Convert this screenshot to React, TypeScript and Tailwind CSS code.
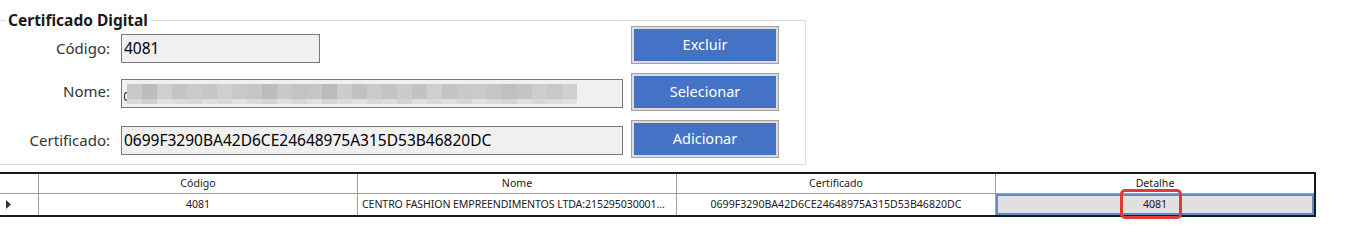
import React from "react";

const blurTop = [
  "#c8c8c8","#bdbdbd","#cfcfcf","#c4c4c4","#cacaca","#c6c6c6","#cfcfcf","#c9c9c9","#c6c6c2","#b9bdbf","#c9c9c9","#c3c3c3","#c5c5c5","#bbbbbb","#cccccc","#c1c1c1","#cacaca","#c4c4c4","#cbcbcb","#c2c2c2","#cfcfcf","#c4c4c4","#c9c9c9","#cacaca","#c5c5c5","#c0c0c0","#c4c4c4","#cdcdcd","#c8c8c8","#d0d0d0",
];
const blurBot = [
  "#d8d8d8","#cfcfcf","#e0e0e0","#dcdcdc","#d6d6d6","#dedede","#d9d9d9","#e2e2e2","#dbdbdb","#d4d4d4","#dedede","#d7d7d7","#e0e0e0","#d5d5d5","#dbdbdb","#e1e1e1","#d8d8d8","#dcdcdc","#d3d3d3","#dfdfdf","#d9d9d9","#dddddd","#d6d6d6","#e0e0e0","#dadada","#d4d4d4","#dedede","#d7d7d7","#dcdcdc","#e0e0e0",
];

function Btn({ label }: { label: string }) {
  return (
    <div className="w-[148px] h-[38px] border border-[#a0a0a0] bg-[#dcdcdc] p-[2px]">
      <div className="w-full h-full bg-[#4472c4] text-white flex items-center justify-center text-[14.5px]">
        {label}
      </div>
    </div>
  );
}

export default function App() {
  const font = { fontFamily: '"Noto Sans", "Open Sans", sans-serif' };
  return (
    <div className="w-[1370px] h-[238px] bg-white relative overflow-hidden text-black" style={font}>
      {/* Group box */}
      <div className="mt-[20px] w-[806px] h-[145px] border-t border-r border-b border-[#dcdcdc] relative flex">
        <div className="absolute left-[6px] top-[-12px] bg-white px-[2px] text-[15.5px] font-bold leading-[22px] text-[#1a1a1a]">
          Certificado Digital
        </div>
        {/* fields */}
        <div className="flex flex-col pt-[13px]">
          <div className="flex items-center h-[29px]">
            <div className="w-[110px] text-right text-[15px] text-[#333]">Código:</div>
            <div className="ml-[11px] w-[199px] h-[29px] border border-[#7a7a7a] bg-[#f0f0f0] flex items-center pl-[2px] text-[15.5px]">
              4081
            </div>
          </div>
          <div className="flex items-center h-[29px] mt-[16px]">
            <div className="w-[110px] text-right text-[15px] text-[#333] mb-[5px]">Nome:</div>
            <div className="ml-[11px] w-[502px] h-[29px] border border-[#7a7a7a] bg-[#f0f0f0] flex items-center pl-[2px] overflow-hidden">
              <div className="w-[3px] h-[9px] mt-[5px] border-l-[1.5px] border-t border-b border-[#333] rounded-l-[4px]" />
              <div className="flex flex-col">
                <div className="flex h-[15px]">
                  {blurTop.map((c, i) => (
                    <div key={i} className="w-[15px] h-full" style={{ background: c }} />
                  ))}
                </div>
                <div className="flex h-[5px]">
                  {blurBot.map((c, i) => (
                    <div key={i} className="w-[15px] h-full" style={{ background: c }} />
                  ))}
                </div>
              </div>
            </div>
          </div>
          <div className="flex items-center h-[29px] mt-[18px]">
            <div className="w-[110px] text-right text-[15px] text-[#333]">Certificado:</div>
            <div className="ml-[11px] w-[502px] h-[29px] border border-[#7a7a7a] bg-[#f0f0f0] flex items-center pl-[2px] text-[15.5px]">
              0699F3290BA42D6CE24648975A315D53B46820DC
            </div>
          </div>
        </div>
        {/* buttons */}
        <div className="flex flex-col gap-[9px] ml-[8px] pt-[5px]">
          <Btn label="Excluir" />
          <Btn label="Selecionar" />
          <Btn label="Adicionar" />
        </div>
      </div>

      {/* Grid */}
      <div className="mt-[7px] w-[1316px] border-t-2 border-b-2 border-r-2 border-[#1a1a1a] text-[10.6px] text-[#1a1a1a] relative">
        <div className="flex h-[20px] border-b border-[#a0a0a0]">
          <div className="w-[39px] border-r border-[#a0a0a0]" />
          <div className="w-[319px] border-r border-[#a0a0a0] flex items-center justify-center">Código</div>
          <div className="w-[319px] border-r border-[#a0a0a0] flex items-center justify-center">Nome</div>
          <div className="w-[319px] border-r border-[#a0a0a0] flex items-center justify-center">Certificado</div>
          <div className="flex-1 flex items-center justify-center">Detalhe</div>
        </div>
        <div className="flex h-[21px]">
          <div className="w-[39px] border-r border-[#a0a0a0] flex items-center pl-[6px]">
            <svg width="5" height="9" viewBox="0 0 5 9">
              <path d="M0 0 L5 4.5 L0 9 Z" fill="#333" />
            </svg>
          </div>
          <div className="w-[319px] border-r border-[#a0a0a0] flex items-center justify-center">4081</div>
          <div className="w-[319px] border-r border-[#a0a0a0] flex items-center pl-[4px] whitespace-nowrap tracking-[-0.1px]">
            CENTRO FASHION EMPREENDIMENTOS LTDA:215295030001...
          </div>
          <div className="w-[319px] border-r border-[#a0a0a0] flex items-center justify-center">
            0699F3290BA42D6CE24648975A315D53B46820DC
          </div>
          <div className="flex-1 border-2 border-[#5f8bcc] bg-[#e0e0e0] flex items-center justify-center">4081</div>
        </div>
        <div className="absolute left-[1120px] top-[15px] w-[62px] h-[30px] border-[3px] border-[#e53935] rounded-[5px]" />
      </div>
    </div>
  );
}
